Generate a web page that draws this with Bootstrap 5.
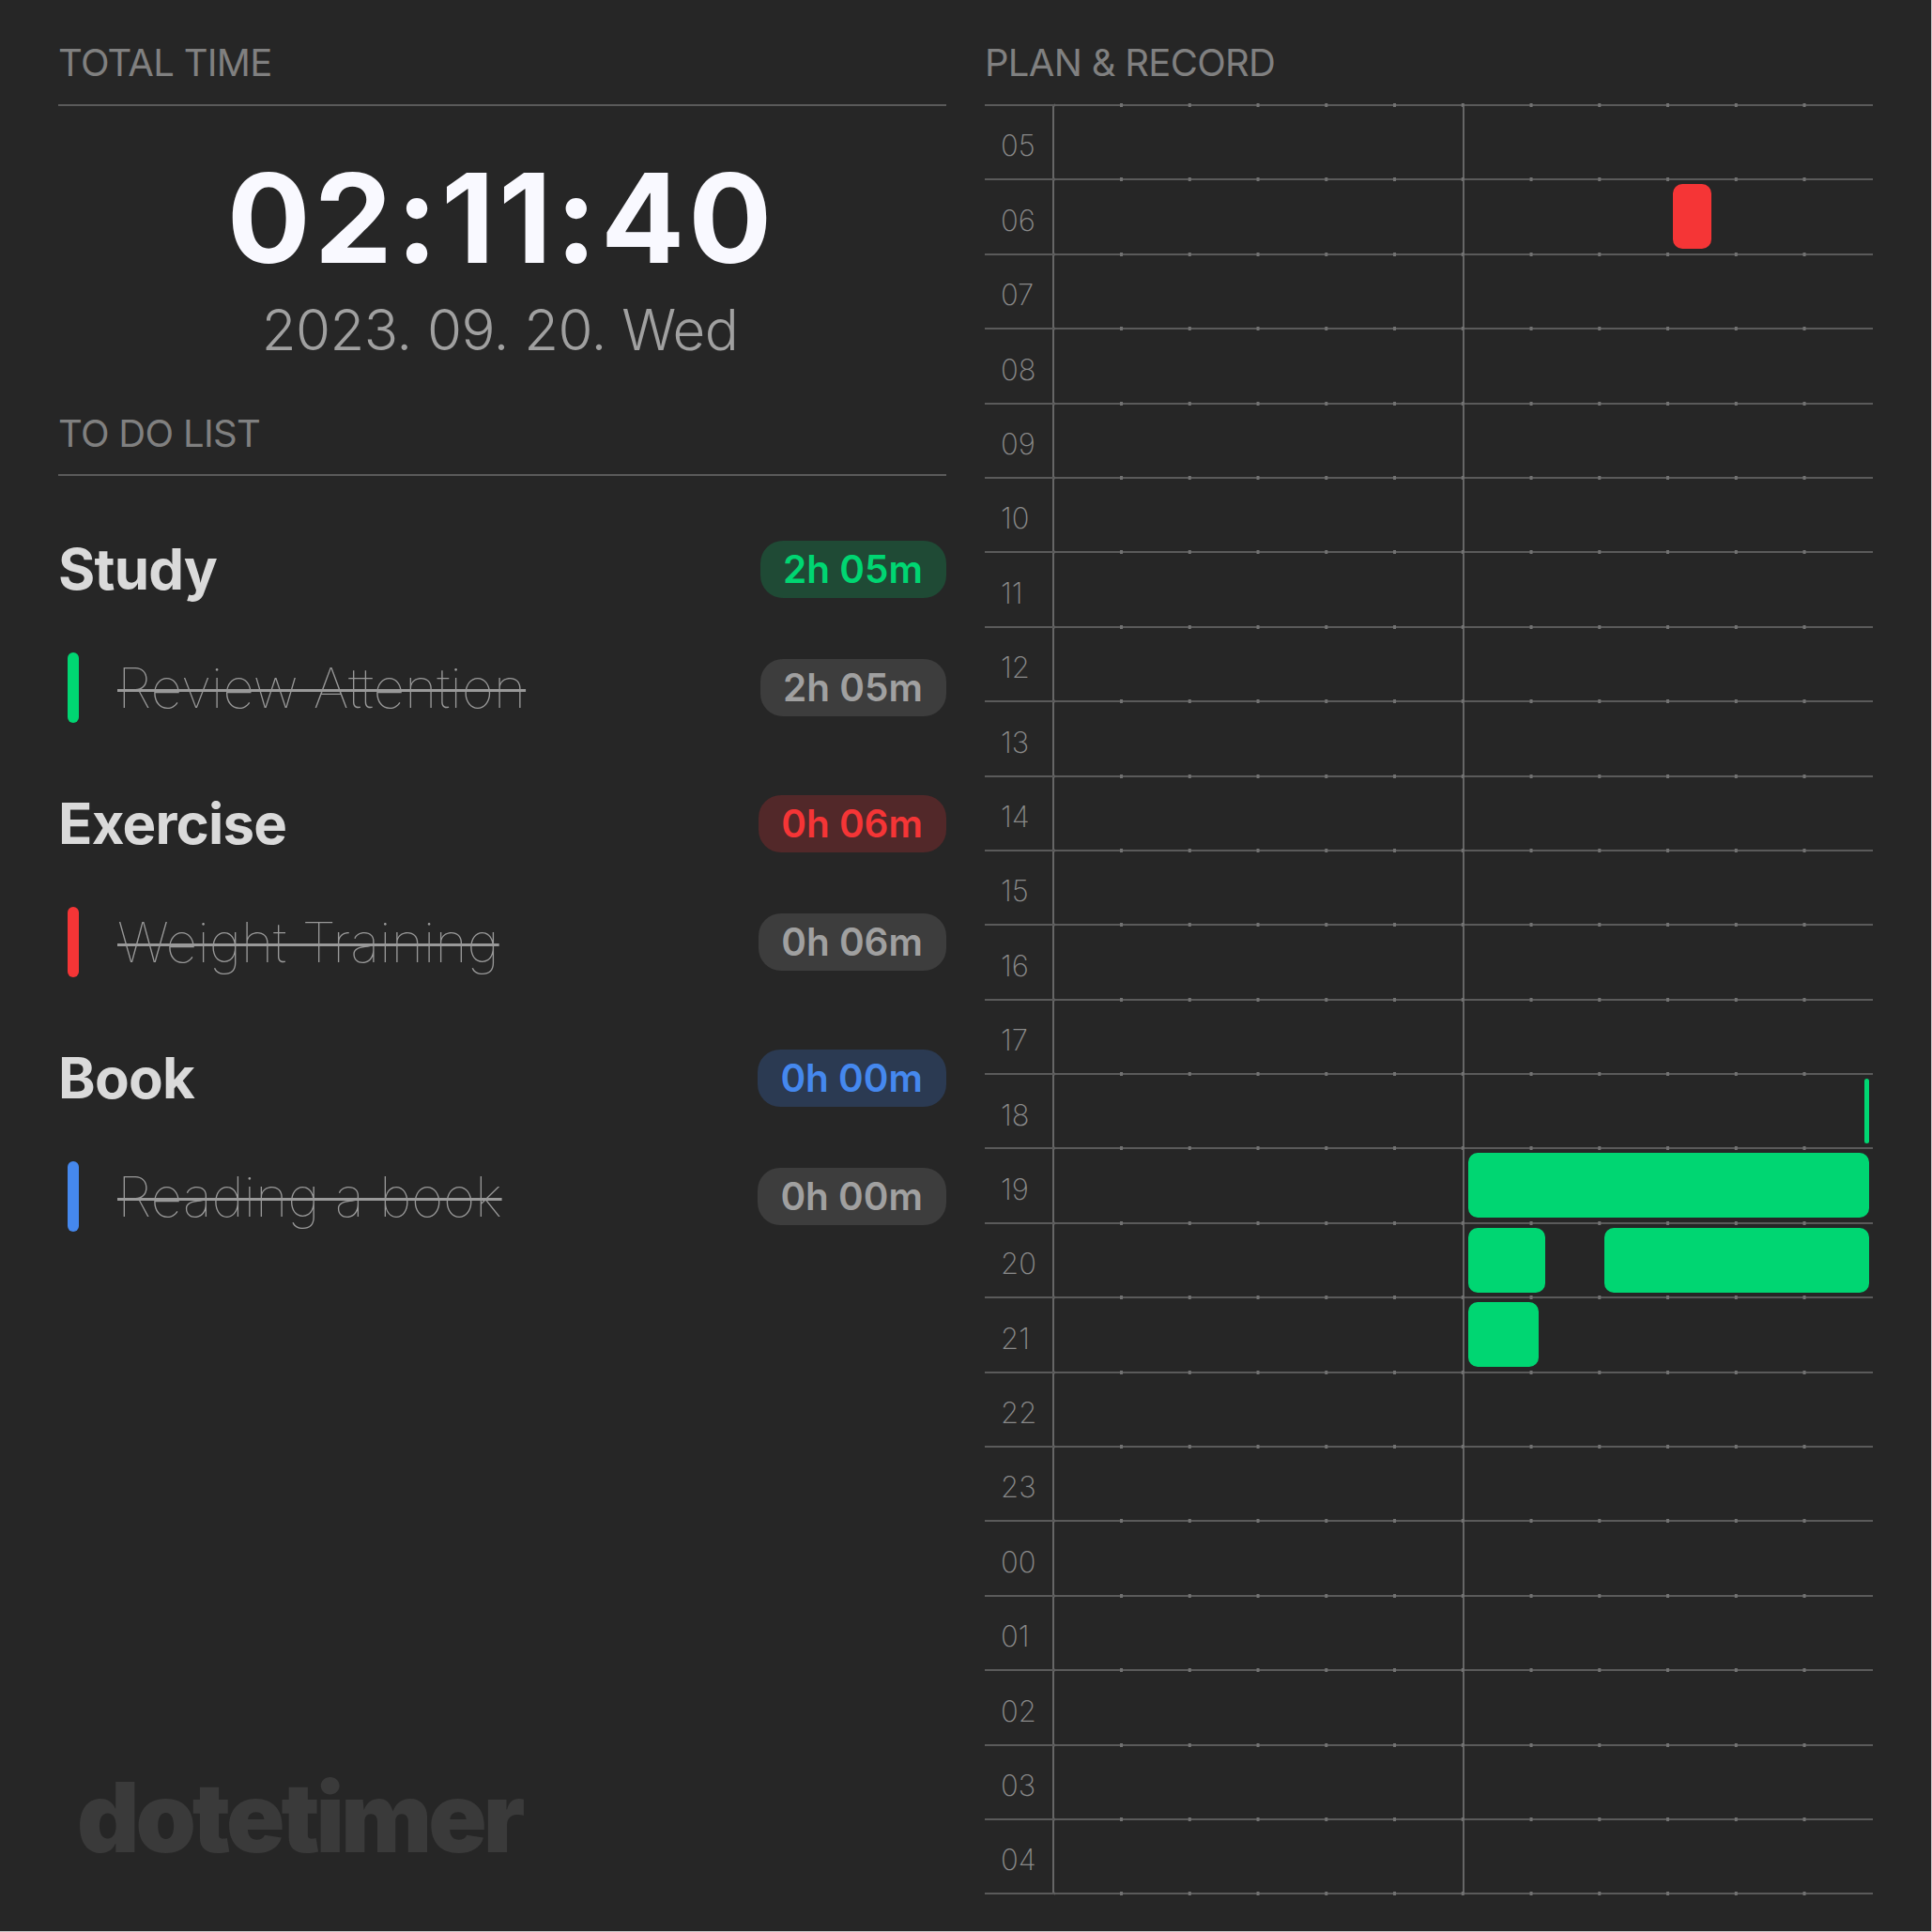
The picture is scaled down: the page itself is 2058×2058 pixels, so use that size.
<!DOCTYPE html>
<html lang="en">
<head>
<meta charset="UTF-8" />
<title>dotetimer</title>
<link href="https://cdn.jsdelivr.net/npm/bootstrap@5.3.0/dist/css/bootstrap.min.css" rel="stylesheet" />
<style>
  html { background: #c8c8c8; }
  body { background: #262626; font-family: Inter, "Liberation Sans", sans-serif; width: 2057px; height: 2057px; overflow: hidden; }
  .sheet { height: 2057px; }
  .pane-left { padding: 0 20.5px 0 62px; height: 2057px; }
  .pane-right { padding: 0 62px 0 20.5px; }
  .sec-title { font-size: 40px; line-height: 48px; color: #808080; font-weight: 400; letter-spacing: -0.7px; padding-top: 43px; margin: 0; border-bottom: 2px solid #5a5a5a; box-sizing: content-box; height: 68px; }
  .clock { font-size: 132px; line-height: 132px; font-weight: 700; color: #f9f9ff; margin-top: 53px; font-kerning: none; letter-spacing: 4px; padding-right: 2px; }
  .clock-date { font-size: 60px; line-height: 72px; font-weight: 300; color: #a0a0a0; letter-spacing: -0.55px; margin-top: 17px; padding-right: 5px; }
  .sec-title.todo-title { margin-top: 8px; height: 67px; }
  .todo-list { margin-top: 69px; }
  .group-name { font-size: 60px; line-height: 61px; font-weight: 700; color: #dadada; letter-spacing: -0.8px; }
  .time-pill { font-size: 40.5px; line-height: 61px; height: 61px; padding: 0 25px 0 24px; border-radius: 24px; font-weight: 600; }
  .pill-green { background: #1f4a35; color: #00d672; }
  .pill-red { background: #522829; color: #f53536; }
  .pill-blue { background: #2b3a52; color: #4588ee; }
  .pill-gray { background: #3d3d3d; color: #a0a0a0; }
  .task-row { margin-top: 65px; height: 61px; }
  .task-group + .task-group { margin-top: 84px; }
  .task-mark { width: 12px; height: 75px; border-radius: 6px; margin-left: 10px; margin-right: 41px; }
  .mark-green { background: #00d672; }
  .mark-red { background: #f53536; }
  .mark-blue { background: #4588ee; }
  .task-name { font-size: 59px; line-height: 61px; font-weight: 100; color: #999; letter-spacing: -0.2px; text-decoration: line-through; text-decoration-thickness: 3px; }
  .logo-word { font-size: 103px; line-height: 103px; font-weight: 900; color: #3a3a3a; letter-spacing: -4px; margin-left: 20px; margin-bottom: 70px; }
  .hour-grid { display: grid; grid-template-rows: repeat(24, 79.4px); }
  .hour-row { border-bottom: 2px solid #5a5a5a; }
  .hour-label { width: 74px; font-size: 31px; font-weight: 200; color: #8a8a8a; padding: 8px 0 0 17px; border-right: 2px solid #666; }
  .hour-cell { position: relative; }
  /* dots sitting on the hour lines, one every 5 min */
  .hour-cell::after, .hour-row:first-child .hour-cell::before {
    content: ""; position: absolute; left: 0; right: 3px; height: 4px;
    background-image: radial-gradient(circle, #727272 1.8px, transparent 2px);
    background-size: 72.75px 4px; background-position: -37.6px 0; background-repeat: repeat-x;
  }
  .hour-cell::after { bottom: -3px; }
  .hour-row:first-child .hour-cell::before { top: -3px; }
  .hour-half { position: absolute; top: 0; bottom: -2px; left: 435px; width: 2px; background: #666; }
  .rec-block { position: absolute; top: 4px; height: 69px; border-radius: 10px; z-index: 1; }
  .rec-green { background: #00d672; }
  .rec-red { background: #f53536; }
</style>
</head>
<body>
<div class="row g-0 sheet">
  <div class="col-6 pane-left d-flex flex-column">
    <h2 class="sec-title">TOTAL TIME</h2>
    <div class="text-center clock">02:11:40</div>
    <div class="text-center clock-date">2023. 09. 20. Wed</div>
    <h2 class="sec-title todo-title">TO DO LIST</h2>
    <div class="todo-list">
      <div class="task-group">
        <div class="d-flex justify-content-between align-items-center">
          <span class="group-name">Study</span><span class="time-pill pill-green">2h 05m</span>
        </div>
        <div class="d-flex align-items-center task-row">
          <span class="task-mark mark-green"></span><span class="task-name">Review Attention</span>
          <span class="time-pill pill-gray ms-auto">2h 05m</span>
        </div>
      </div>
      <div class="task-group">
        <div class="d-flex justify-content-between align-items-center">
          <span class="group-name">Exercise</span><span class="time-pill pill-red">0h 06m</span>
        </div>
        <div class="d-flex align-items-center task-row">
          <span class="task-mark mark-red"></span><span class="task-name">Weight Training</span>
          <span class="time-pill pill-gray ms-auto">0h 06m</span>
        </div>
      </div>
      <div class="task-group">
        <div class="d-flex justify-content-between align-items-center">
          <span class="group-name">Book</span><span class="time-pill pill-blue">0h 00m</span>
        </div>
        <div class="d-flex align-items-center task-row">
          <span class="task-mark mark-blue"></span><span class="task-name">Reading a book</span>
          <span class="time-pill pill-gray ms-auto">0h 00m</span>
        </div>
      </div>
    </div>
    <div class="logo-word mt-auto">dotetimer</div>
  </div>
  <div class="col-6 pane-right">
    <h2 class="sec-title">PLAN &amp; RECORD</h2>
    <div class="hour-grid" id="hours"></div>
  </div>
</div>
<script>
  // left and width in px from the start of the hour cell
  const records = {
    "06": [[659, 41, "rec-red"]],
    "18": [[863, 5, "rec-green"]],
    "19": [[441, 427, "rec-green"]],
    "20": [[441, 82, "rec-green"], [586, 282, "rec-green"]],
    "21": [[441, 75, "rec-green"]],
  };
  const hours = ["05","06","07","08","09","10","11","12","13","14","15","16","17","18","19","20","21","22","23","00","01","02","03","04"];
  const grid = document.getElementById("hours");
  hours.forEach((h) => {
    const blocks = (records[h] || []).map(([left, width, cls]) =>
      `<div class="rec-block ${cls}${width < 8 ? " rounded-pill" : ""}" style="left:${left}px;width:${width}px"></div>`).join("");
    grid.insertAdjacentHTML("beforeend",
      `<div class="hour-row d-flex"><div class="hour-label d-flex align-items-center">${h}</div><div class="hour-cell flex-grow-1"><div class="hour-half"></div>${blocks}</div></div>`);
  });
</script>
<script src="https://cdn.jsdelivr.net/npm/bootstrap@5.3.0/dist/js/bootstrap.bundle.min.js"></script>
</body>
</html>
